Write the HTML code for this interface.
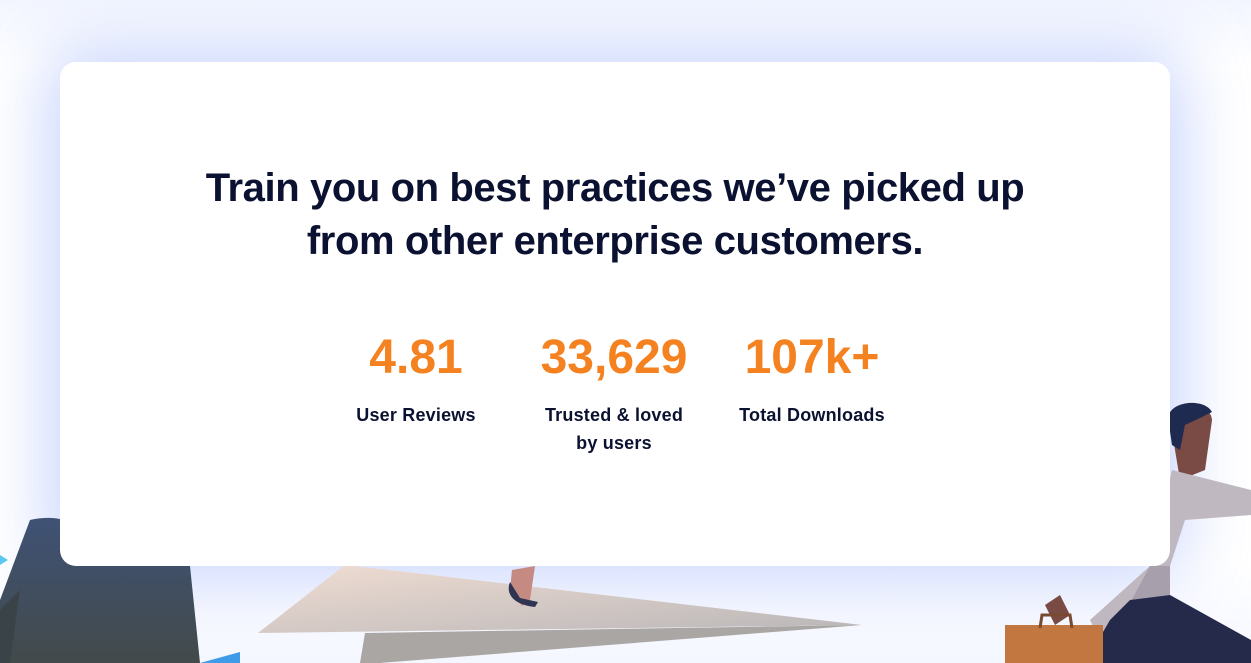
<!DOCTYPE html>
<html><head><style>
html,body{margin:0;padding:0}
body{width:1251px;height:663px;overflow:hidden;position:relative;background:#fff;font-family:"Liberation Sans",sans-serif}
.bg{position:absolute;inset:0;background:linear-gradient(180deg,#f3f6ff 0%,#fff 10%,#fff 85%,#f5f7ff 100%)}
.card{position:absolute;left:60px;top:62px;width:1110px;height:504px;background:#fff;border-radius:16px;box-shadow:0 0 70px 10px rgba(160,182,250,.6)}
.cardtop{position:absolute;left:60px;top:62px;width:1110px;height:504px;background:#fff;border-radius:16px}
h1{position:absolute;left:0;width:1230px;top:162px;margin:0;text-align:center;font-size:40px;line-height:53px;font-weight:bold;color:#0b1130;letter-spacing:-0.4px}
.stat{position:absolute;top:330px;width:200px;text-align:center}
.n{font-size:48px;font-weight:bold;color:#f58220;line-height:56px}
.l{font-size:18px;font-weight:bold;color:#0b1130;line-height:28px;margin-top:15px;letter-spacing:0.2px}
svg{position:absolute;left:0;top:0}
</style></head><body>
<div class="bg"></div>
<div class="card"></div>
<svg width="1251" height="663">
<defs>
<linearGradient id="pl" x1="0" y1="0" x2="1" y2="1"><stop offset="0" stop-color="#f0ddd2"/><stop offset="1" stop-color="#b9b6b8"/></linearGradient>
<linearGradient id="pr" x1="0" y1="0" x2="0" y2="1"><stop offset="0" stop-color="#3f5275"/><stop offset="1" stop-color="#424a4a"/></linearGradient>
</defs>
<polygon points="258,633 345,565 862,625" fill="url(#pl)"/>
<polygon points="365,633 862,625 380,663 360,663" fill="#a9a6a4"/>
<path d="M512,570 L535,566 L530,600 L522,606 L510,590 Z" fill="#c58b82"/>
<path d="M510,582 C505,595 515,605 535,607 L538,602 L520,598 Z" fill="#2e3452"/>
<path d="M30,520 C50,515 70,520 60,522 L190,566 L200,663 L0,663 L0,600 Z" fill="url(#pr)"/>
<path d="M20,590 L10,663 L0,663 L0,610 Z" fill="#3a4448"/>
<polygon points="200,663 240,652 240,663" fill="#3d9be8"/>
<polygon points="0,555 8,560 0,565" fill="#5ac8f0"/>
<path d="M1170,420 C1175,400 1210,400 1212,420 L1205,470 L1180,480 Z" fill="#7a4a44"/>
<path d="M1168,418 C1170,400 1205,398 1212,412 L1200,418 L1185,425 L1180,450 L1172,445 Z" fill="#1e2a50"/>
<path d="M1172,470 L1251,490 L1251,515 L1185,520 L1170,566 L1150,600 L1100,640 L1090,620 L1150,566 Z" fill="#bfb8c0"/>
<path d="M1150,566 L1170,566 L1170,640 L1130,655 L1110,640 Z" fill="#a7a0ac"/>
<path d="M1130,600 L1170,595 L1251,640 L1251,663 L1085,663 L1110,620 Z" fill="#262a4a"/>
<path d="M1045,605 L1060,595 L1070,615 L1055,625 Z" fill="#7a4a44"/>
<rect x="1005" y="625" width="98" height="38" fill="#c27640"/>
<path d="M1040,628 L1042,615 L1070,615 L1072,628" stroke="#7a4a30" stroke-width="3" fill="none"/>
</svg>
<div class="cardtop"></div>
<h1>Train you on best practices we’ve picked up<br>from other enterprise customers.</h1>
<div class="stat" style="left:316px"><div class="n">4.81</div><div class="l">User Reviews</div></div>
<div class="stat" style="left:514px"><div class="n">33,629</div><div class="l">Trusted &amp; loved<br>by users</div></div>
<div class="stat" style="left:712px"><div class="n">107k+</div><div class="l">Total Downloads</div></div>
</body></html>
